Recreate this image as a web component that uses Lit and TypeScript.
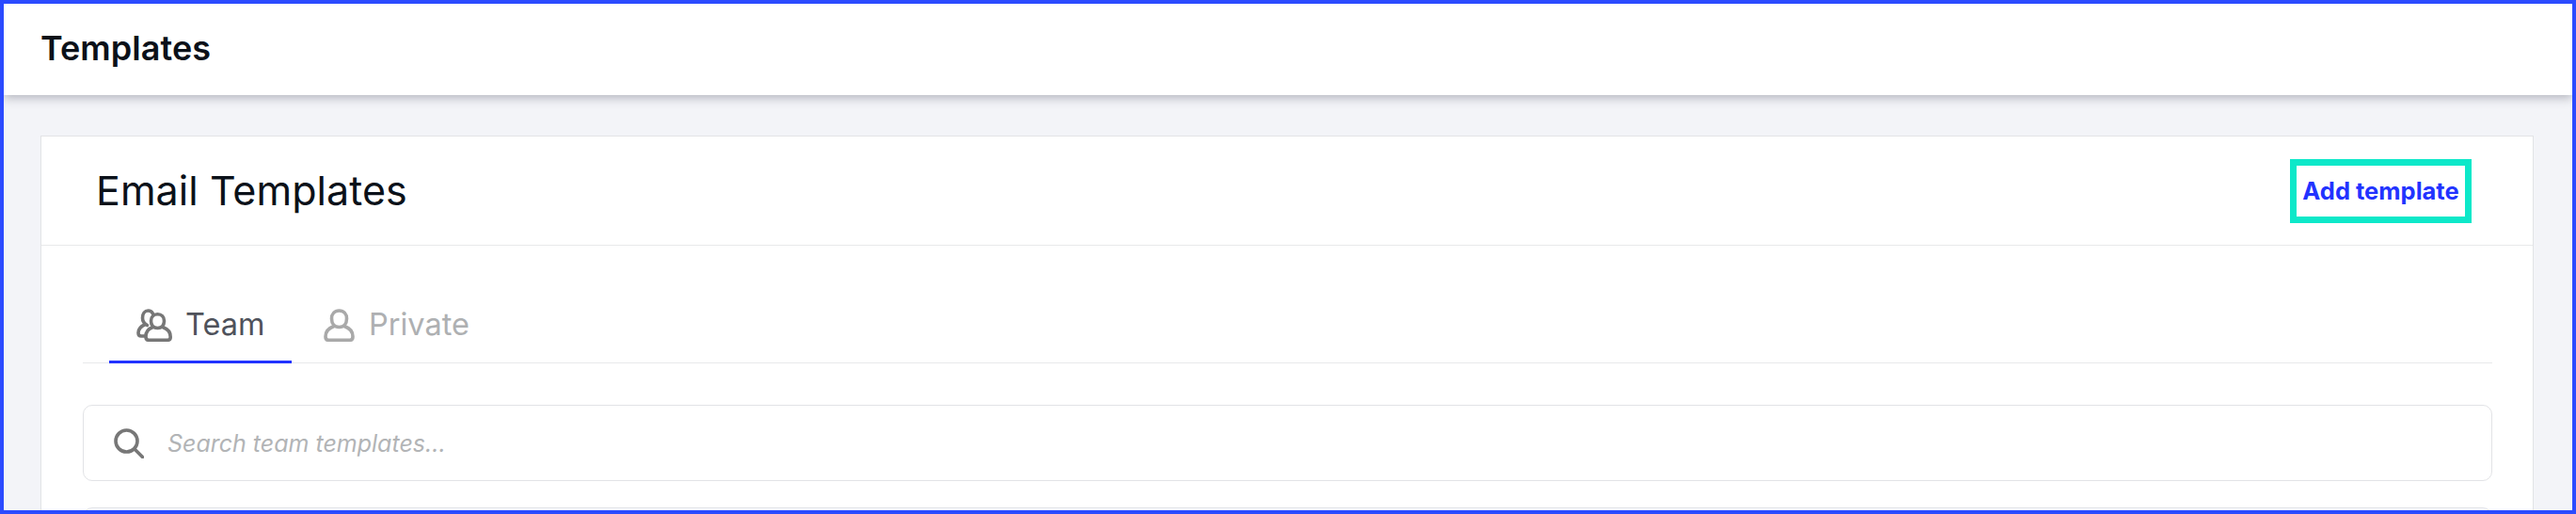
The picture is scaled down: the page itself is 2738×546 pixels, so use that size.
import { LitElement, html, css } from "lit";
import { customElement } from "lit/decorators.js";

@customElement("app-root")
export class AppRoot extends LitElement {
  static styles = css`
    :host {
      display: block;
      width: 100%;
      height: 546px;
      font-family: Inter, "Noto Sans", sans-serif;
    }
    .frame {
      box-sizing: border-box;
      height: 546px;
      border: 4px solid #2b4bff;
      background: #f3f4f8;
      overflow: hidden;
      display: flex;
      flex-direction: column;
    }
    .topbar {
      flex: none;
      box-sizing: border-box;
      height: 97px;
      background: #fff;
      box-shadow: 0 3px 10px rgba(60, 64, 80, 0.35);
      display: flex;
      align-items: center;
      padding: 0 0 4px 39px;
      font-size: 36px;
      font-weight: 600;
      letter-spacing: 0.05px;
      color: #0b1119;
      position: relative;
    }
    .main {
      flex: 1;
      min-height: 0;
      padding: 43px 41px 0 39px;
    }
    .card {
      box-sizing: border-box;
      background: #fff;
      border: 1px solid #e2e3e6;
      min-height: 500px;
    }
    .card-head {
      box-sizing: border-box;
      height: 116px;
      border-bottom: 1px solid #e8e9eb;
      display: flex;
      align-items: center;
      justify-content: space-between;
      padding: 0 65px 0 58px;
    }
    h1 {
      margin: 0 0 2px;
      font-size: 43px;
      font-weight: 400;
      letter-spacing: 0.05px;
      color: #0b1119;
    }
    .add {
      box-sizing: border-box;
      height: 68px;
      width: 193px;
      border: 7px solid #0de8c9;
      background: #fff;
      display: flex;
      align-items: center;
      justify-content: center;
      font: 700 25.5px Inter, sans-serif;
      color: #2233ff;
      padding: 0;
    }
    .body {
      padding: 0 43px 0 44px;
    }
    .tabs {
      box-sizing: border-box;
      height: 125px;
      border-bottom: 1px solid #e8e9eb;
      display: flex;
      align-items: flex-end;
      padding-left: 28px;
    }
    .tab {
      box-sizing: border-box;
      height: 62px;
      margin-bottom: -1px;
      display: flex;
      align-items: center;
      gap: 15px;
      font-size: 32.5px;
      line-height: 38px;
      color: #aeb0b2;
      padding: 0 20px 17px 0;
      border-bottom: 3px solid transparent;
    }
    .tab svg {
      flex: none;
    }
    .tab.active {
      width: 194px;
      padding-left: 29px;
      gap: 14px;
      color: #4f525b;
      border-bottom-color: #2233ff;
      margin-right: 34px;
    }
    .search {
      box-sizing: border-box;
      height: 81px;
      margin-top: 44px;
      border: 1px solid #e2e3e6;
      border-radius: 10px;
      display: flex;
      align-items: center;
      padding-left: 32px;
      gap: 25px;
      font-size: 25px;
      font-style: italic;
      color: #b2b4b6;
    }
    .next {
      box-sizing: border-box;
      height: 81px;
      margin-top: 28px;
      border: 1px solid #e2e3e6;
      border-radius: 10px;
    }
  `;

  render() {
    return html`
      <div class="frame">
        <header class="topbar">Templates</header>
        <main class="main">
          <section class="card">
            <div class="card-head">
              <h1>Email Templates</h1>
              <button class="add">Add template</button>
            </div>
            <div class="body">
              <nav class="tabs">
                <div class="tab active">
                  <svg width="38" height="35" viewBox="0 0 38 35" fill="none" stroke="#777" stroke-width="3.600" stroke-linecap="round" stroke-linejoin="round">
                    <path d="M11.500 17.500c-3-1.600-5-4-5-7.800C6.500 5 9 2 12.500 2c2.500 0 4 1.200 5 3.200"/>
                    <path d="M9.500 16.500C5 18.500 2 21.800 2 25.500c0 2.200 1.200 3.500 3 3.500h4.500"/>
                    <path d="M22.500 5.700c4.200 0 7 3 7 7.300 0 4.500-2.800 7.500-7 7.500s-7-3-7-7.500c0-4.300 2.800-7.300 7-7.300z"/>
                    <path d="M17 19.800C12.500 21.500 10 25.500 10 29.500c0 2.500 1 3.800 3 3.800h20c2 0 3.200-1.300 3.200-3.300 0-4.500-3-8.500-7.700-10.200"/>
                  </svg>
                  <span>Team</span>
                </div>
                <div class="tab">
                  <svg width="33" height="35" viewBox="0 0 33 35" fill="none" stroke="#a9a9a9" stroke-width="3.600" stroke-linecap="round" stroke-linejoin="round">
                    <path d="M16.500 2c5 0 8 3.500 8 8.500 0 5.500-3 9-8 9s-8-3.500-8-9C8.500 5.500 11.500 2 16.500 2z"/>
                    <path d="M11 18.500C5.500 20.500 2 24.500 2 29.500c0 2.500 1 3.800 3 3.800h23c2 0 3-1.300 3-3.800 0-5-3.500-9-9-11"/>
                  </svg>
                  <span>Private</span>
                </div>
              </nav>
              <div class="search">
                <svg width="32" height="32" viewBox="0 0 32 32" fill="none" stroke="#777" stroke-width="3.600" stroke-linecap="round">
                  <circle cx="13.500" cy="13.500" r="11.500"/>
                  <path d="M22 22L30.500 30.500"/>
                </svg>
                <span>Search team templates...</span>
              </div>
              <div class="next"></div>
            </div>
          </section>
        </main>
      </div>
    `;
  }
}
